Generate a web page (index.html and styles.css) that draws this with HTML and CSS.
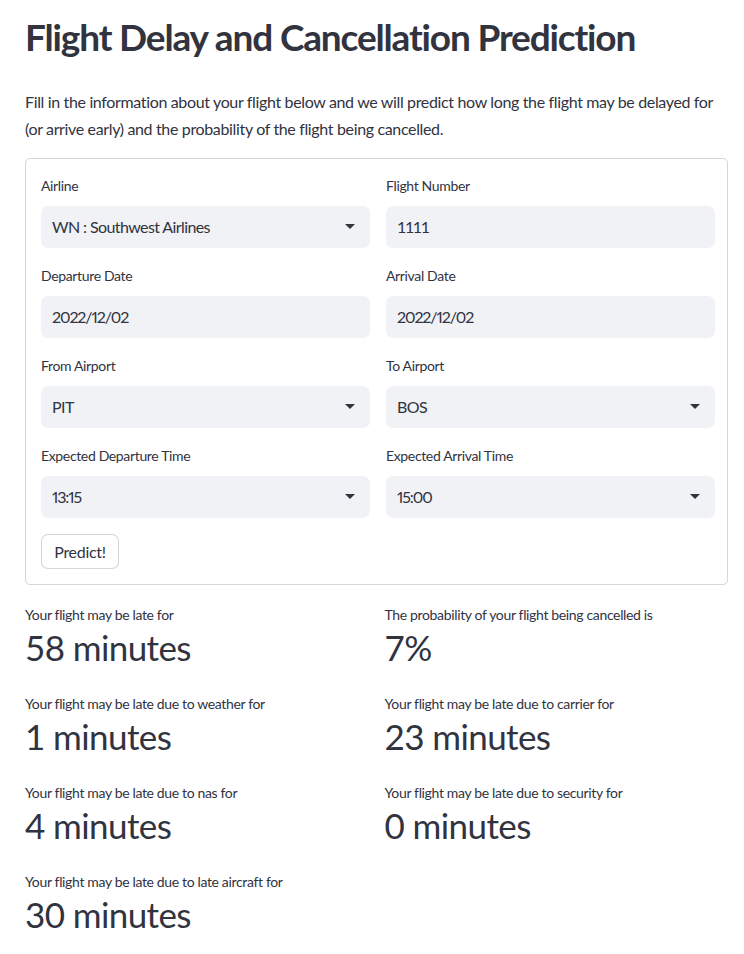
FILE: index.html
```html
<!DOCTYPE html>
<html lang="en">
<head>
<meta charset="utf-8">
<title>Flight Delay and Cancellation Prediction</title>
<link rel="stylesheet" href="styles.css">
</head>
<body>
<main class="app">
  <h1 class="title">Flight Delay and Cancellation Prediction</h1>
  <p class="intro">Fill in the information about your flight below and we will predict how long the flight may be delayed for (or arrive early) and the probability of the flight being cancelled.</p>

  <form class="form">
    <div class="fields">
      <div class="field">
        <label class="label">Airline</label>
        <div class="input select"><span>WN : Southwest Airlines</span><svg class="caret" width="10" height="5" viewBox="0 0 10 5"><path d="M0 0h10L5 5z" fill="#31333F"/></svg></div>
      </div>
      <div class="field">
        <label class="label">Flight Number</label>
        <div class="input"><span class="num-tab">1111</span></div>
      </div>
      <div class="field">
        <label class="label">Departure Date</label>
        <div class="input"><span class="num">2022/12/02</span></div>
      </div>
      <div class="field">
        <label class="label">Arrival Date</label>
        <div class="input"><span class="num">2022/12/02</span></div>
      </div>
      <div class="field">
        <label class="label">From Airport</label>
        <div class="input select"><span>PIT</span><svg class="caret" width="10" height="5" viewBox="0 0 10 5"><path d="M0 0h10L5 5z" fill="#31333F"/></svg></div>
      </div>
      <div class="field">
        <label class="label">To Airport</label>
        <div class="input select"><span>BOS</span><svg class="caret" width="10" height="5" viewBox="0 0 10 5"><path d="M0 0h10L5 5z" fill="#31333F"/></svg></div>
      </div>
      <div class="field">
        <label class="label">Expected Departure Time</label>
        <div class="input select"><span class="num">13:15</span><svg class="caret" width="10" height="5" viewBox="0 0 10 5"><path d="M0 0h10L5 5z" fill="#31333F"/></svg></div>
      </div>
      <div class="field">
        <label class="label">Expected Arrival Time</label>
        <div class="input select"><span class="num">15:00</span><svg class="caret" width="10" height="5" viewBox="0 0 10 5"><path d="M0 0h10L5 5z" fill="#31333F"/></svg></div>
      </div>
    </div>
    <button type="button" class="btn">Predict!</button>
  </form>

  <section class="results">
    <div class="metric">
      <div class="metric-label">Your flight may be late for</div>
      <div class="metric-value">58 minutes</div>
    </div>
    <div class="metric">
      <div class="metric-label">The probability of your flight being cancelled is</div>
      <div class="metric-value">7%</div>
    </div>
    <div class="metric">
      <div class="metric-label">Your flight may be late due to weather for</div>
      <div class="metric-value">1 minutes</div>
    </div>
    <div class="metric">
      <div class="metric-label">Your flight may be late due to carrier for</div>
      <div class="metric-value">23 minutes</div>
    </div>
    <div class="metric">
      <div class="metric-label">Your flight may be late due to nas for</div>
      <div class="metric-value">4 minutes</div>
    </div>
    <div class="metric">
      <div class="metric-label">Your flight may be late due to security for</div>
      <div class="metric-value">0 minutes</div>
    </div>
    <div class="metric">
      <div class="metric-label">Your flight may be late due to late aircraft for</div>
      <div class="metric-value">30 minutes</div>
    </div>
  </section>
</main>
</body>
</html>
```

FILE: styles.css
```css
* { box-sizing: border-box; }

html, body {
  margin: 0;
  padding: 0;
  background: #ffffff;
}

body {
  font-family: "Lato", "Liberation Sans", sans-serif;
  color: #31333F;
  font-variant-numeric: proportional-nums;
}

.app {
  padding: 10px 16px 20px 25px;
}

.title {
  margin: 0;
  font-size: 37px;
  font-weight: 700;
  line-height: 54px;
  letter-spacing: -1.15px;
}

.intro {
  margin: 24px 0 0 0;
  font-size: 16px;
  line-height: 27px;
  letter-spacing: -0.35px;
}

.form {
  margin-top: 16px;
  border: 1px solid rgba(49, 51, 63, 0.2);
  border-radius: 5px;
  padding: 15px 12px 15px 15px;
}

.fields {
  display: grid;
  grid-template-columns: 329px 329px;
  column-gap: 16px;
  row-gap: 16px;
}

.field {
  display: flex;
  flex-direction: column;
}

.label {
  font-size: 14px;
  line-height: 24px;
  margin-bottom: 8px;
  letter-spacing: -0.35px;
}

.input {
  height: 42px;
  background: #f0f2f6;
  border-radius: 7px;
  padding: 0 15px 2px 11px;
  display: flex;
  align-items: center;
  justify-content: space-between;
  font-size: 16px;
  letter-spacing: -0.6px;
}

.num {
  letter-spacing: -1.1px;
}

.num-tab {
  font-variant-numeric: tabular-nums;
  letter-spacing: -1.4px;
}

.caret {
  flex: none;
}

.btn {
  margin-top: 16px;
  height: 35px;
  width: 78px;
  padding: 0 0 1px;
  background: #ffffff;
  border: 1px solid rgba(49, 51, 63, 0.2);
  border-radius: 7px;
  font-family: inherit;
  font-size: 16px;
  letter-spacing: -0.3px;
  color: #31333F;
}

.results {
  margin-top: 18px;
  display: grid;
  grid-template-columns: 1fr 1fr;
  column-gap: 16px;
  row-gap: 16px;
}

.metric-label {
  font-size: 14px;
  line-height: 24px;
  letter-spacing: -0.35px;
}

.metric-value {
  font-size: 35px;
  line-height: 45px;
  margin-top: -2px;
  padding: 0 0 6px;
  letter-spacing: -0.6px;
  font-variant-numeric: tabular-nums;
}
```
